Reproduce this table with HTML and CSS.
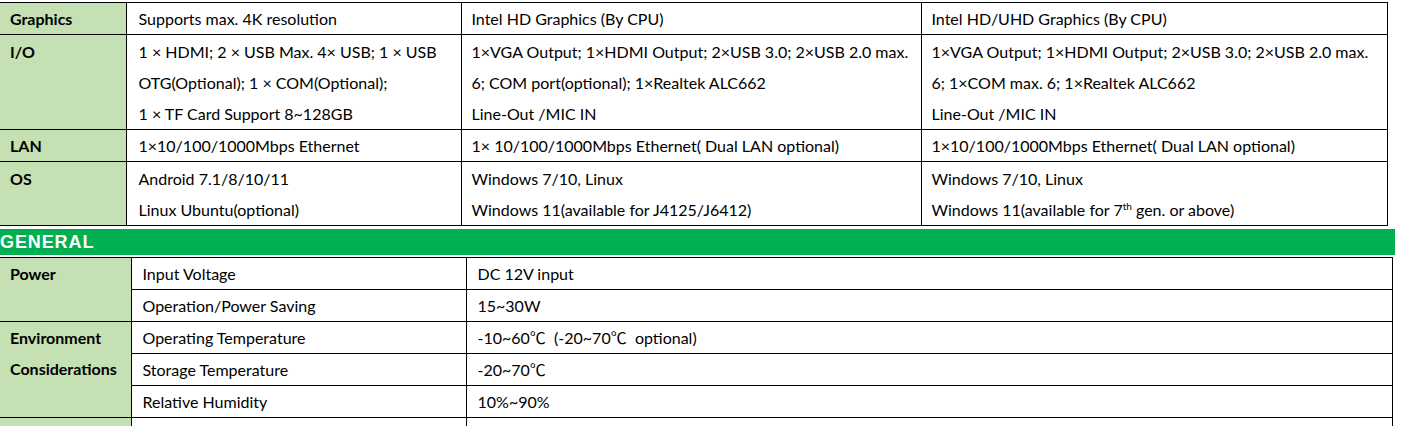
FILE: index.html
```html
<!DOCTYPE html>
<html>
<head>
<meta charset="utf-8">
<link rel="stylesheet" href="styles.css">
</head>
<body>
<div class="page">
  <table class="spec spec-top">
    <colgroup><col class="c1"><col class="c2"><col class="c3"><col class="c4"></colgroup>
    <tr>
      <th>Graphics</th>
      <td>Supports max. 4K resolution</td>
      <td>Intel HD Graphics (By CPU)</td>
      <td>Intel HD/UHD Graphics (By CPU)</td>
    </tr>
    <tr class="tall">
      <th>I/O</th>
      <td>1 × HDMI; 2 × USB Max. 4× USB; 1 × USB<br>OTG(Optional); 1 × COM(Optional);<br>1 × TF Card Support 8~128GB</td>
      <td>1×VGA Output; 1×HDMI Output; 2×USB 3.0; 2×USB 2.0 max.<br>6; COM port(optional); 1×Realtek ALC662<br>Line-Out /MIC IN</td>
      <td>1×VGA Output; 1×HDMI Output; 2×USB 3.0; 2×USB 2.0 max.<br>6; 1×COM max. 6; 1×Realtek ALC662<br>Line-Out /MIC IN</td>
    </tr>
    <tr>
      <th>LAN</th>
      <td>1×10/100/1000Mbps Ethernet</td>
      <td>1× 10/100/1000Mbps Ethernet( Dual LAN optional)</td>
      <td>1×10/100/1000Mbps Ethernet( Dual LAN optional)</td>
    </tr>
    <tr class="tall">
      <th>OS</th>
      <td>Android 7.1/8/10/11<br>Linux Ubuntu(optional)</td>
      <td>Windows 7/10, Linux<br>Windows 11(available for J4125/J6412)</td>
      <td>Windows 7/10, Linux<br>Windows 11(available for 7<sup>th</sup> gen. or above)</td>
    </tr>
  </table>

  <div class="section-bar">GENERAL</div>

  <table class="spec spec-general">
    <colgroup><col class="g1"><col class="g2"><col class="g3"></colgroup>
    <tr>
      <th rowspan="2">Power</th>
      <td>Input Voltage</td>
      <td>DC 12V input</td>
    </tr>
    <tr>
      <td>Operation/Power Saving</td>
      <td>15~30W</td>
    </tr>
    <tr>
      <th rowspan="3">Environment<br>Considerations</th>
      <td>Operating Temperature</td>
      <td>-10~60<span class="deg">℃</span>&nbsp; (-20~70<span class="deg">℃</span>&nbsp; optional)</td>
    </tr>
    <tr>
      <td>Storage Temperature</td>
      <td>-20~70<span class="deg">℃</span></td>
    </tr>
    <tr>
      <td>Relative Humidity</td>
      <td>10%~90%</td>
    </tr>
    <tr>
      <th>&nbsp;</th>
      <td>&nbsp;</td>
      <td>&nbsp;</td>
    </tr>
  </table>
</div>
</body>
</html>
```

FILE: styles.css
```css
html, body {
  margin: 0;
  padding: 0;
  background: #ffffff;
}

body {
  font-family: "Lato", "Liberation Sans", sans-serif;
  font-size: 16px;
  color: #000;
  overflow: hidden;
}

.page {
  padding-top: 2px;
  width: 1401px;
}

.spec {
  border-collapse: collapse;
  table-layout: fixed;
}

.spec th,
.spec td {
  border: 1px solid #000;
  vertical-align: top;
  text-align: left;
  line-height: 31px;
  padding: 0 10px 0 10px;
  white-space: nowrap;
}

.spec .tall th,
.spec .tall td {
  padding-top: 1px;
}

.spec th {
  background: #c5e0b3;
  font-weight: bold;
  border-left: none;
}

.spec-top {
  width: 1387px;
}

.spec-top .c1 { width: 126px; }
.spec-top .c2 { width: 335px; }
.spec-top .c3 { width: 460px; }
.spec-top .c4 { width: 466px; }

.spec-top td:nth-child(2) {
  padding-left: 12px;
}

.spec sup {
  font-size: 10px;
  line-height: 0;
  vertical-align: 6px;
}

.section-bar {
  margin-top: 3px;
  width: 1395px;
  height: 26px;
  background: #00b050;
  color: #fff;
  font-family: "Liberation Sans", Arial, sans-serif;
  font-weight: bold;
  font-size: 18px;
  letter-spacing: 0.9px;
  line-height: 26px;
}

.spec-general {
  margin-top: 2px;
  width: 1392px;
}

.spec-general .g1 { width: 131px; }
.spec-general .g2 { width: 335px; }
.spec-general .g3 { width: 926px; }

.spec-general th,
.spec-general td {
  line-height: 31px;
  padding-left: 11px;
}

.spec-general th {
  padding-left: 10px;
}

.deg {
  font-family: "Noto Sans CJK SC", sans-serif;
  font-weight: normal;
}
```
